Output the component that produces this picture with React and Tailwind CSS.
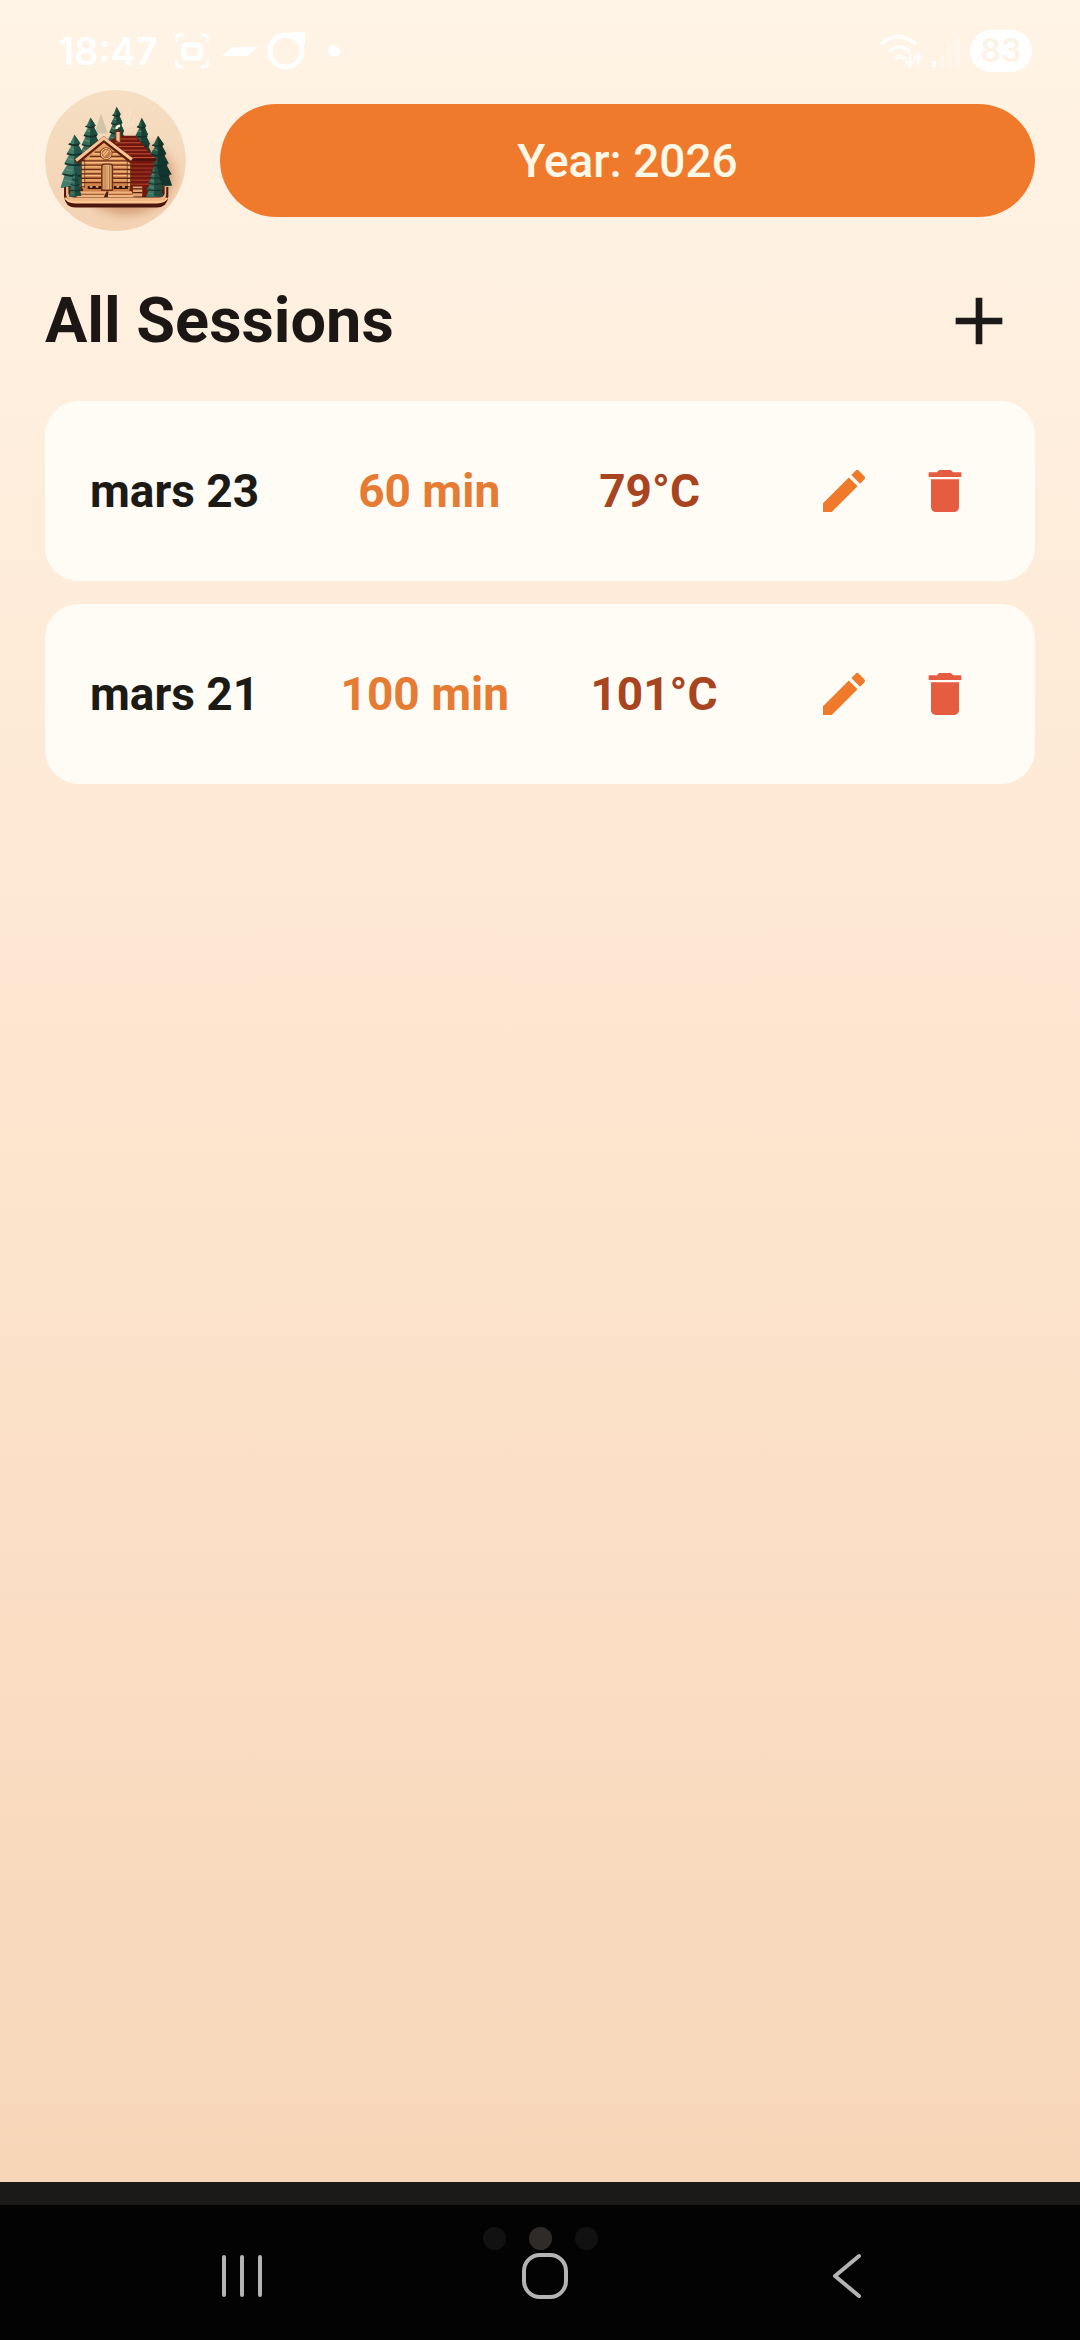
import React, { useState } from 'react';
import { MdAdd, MdDelete, MdEdit } from 'react-icons/md';

const initialSessions = [
  { id: 1, date: 'mars 23', duration: '60 min', temperature: '79°C' },
  { id: 2, date: 'mars 21', duration: '100 min', temperature: '101°C' },
];

const StatusBar = () => (
  <div className="flex items-center justify-between h-[90px] pt-[30px] pb-[18px] pl-[58px] pr-[48px] text-white">
    <div className="flex items-center">
      <span className="font-['Inter',sans-serif] text-[38px] leading-[42px] font-semibold">18:47</span>
      <svg viewBox="0 0 36 36" className="ml-4 w-9 h-9" fill="none" stroke="currentColor" strokeWidth="3">
        <path d="M2 9V6q0-4 4-4h3M27 2h3q4 0 4 4v3M34 27v3q0 4-4 4h-3M9 34H6q-4 0-4-4v-3" />
        <rect x="10" y="12" width="16" height="13" rx="2" strokeWidth="5" />
      </svg>
      <svg viewBox="0 0 36 12" className="ml-3 w-9 h-3" fill="currentColor">
        <path d="M0 11 8 4q2-2 5-2h23l-8 7q-2 2-5 2z" />
      </svg>
      <svg viewBox="0 0 40 40" className="ml-2 w-10 h-10" fill="none" stroke="currentColor" strokeWidth="5">
        <circle cx="20" cy="20" r="16" />
        <path d="M25 1h14v14z" fill="currentColor" stroke="none" />
      </svg>
      <span className="ml-[22px] w-3 h-3 rounded-full bg-white" />
    </div>
    <div className="flex items-center">
      <svg viewBox="0 0 44 36" className="w-11 h-9 opacity-80" fill="none" stroke="currentColor" strokeWidth="4">
        <path d="M1 11q17-15 35 0M8 19q11-10 22 0M14 26q6-5 11 0" />
        <path d="M30 21v11m-4-4 4 5 4-5M38 34V22m-4 4 4-5 4 5" strokeWidth="3" />
      </svg>
      <svg viewBox="0 0 30 32" className="ml-2 mr-2 w-[30px] h-8" fill="currentColor">
        <path d="M0 26h4v6H0z" />
        <path d="M8 18h4v14H8zM16 9h4v23h-4zM24 0h4v32h-4z" opacity=".3" />
      </svg>
      <span className="w-[62px] h-[42px] rounded-full bg-white text-center font-['Inter',sans-serif] text-[32px] leading-[42px] font-semibold text-[#fbf3e6]">
        83
      </span>
    </div>
  </div>
);

const Pine = ({ x, y, w, h, color, shade }) => (
  <svg x={x} y={y} width={w} height={h} viewBox="0 0 60 160" preserveAspectRatio="none">
    <path
      d="M30 0 43 27l-5 2 10 26-6 1 11 29-6 2 12 32-7 1 8 33-60 7 9-38-7-2 13-31-7-1 12-31-6-1 11-26-5-1z"
      fill={color}
    />
    <path
      d="M30 0 43 27l-5 2 10 26-6 1 11 29-6 2 12 32-7 1 8 33H28z"
      fill={shade}
    />
    <path
      d="M18 28q12 8 22 1M14 57q17 9 32 0M10 87q20 10 40 1M6 119q24 10 48 2"
      fill="none"
      stroke="#123029"
      strokeWidth="5"
    />
    <path
      d="M20 41l9 4M16 72l12 5M12 104l14 5M8 137l16 4"
      stroke="#6d9180"
      strokeWidth="3"
    />
  </svg>
);

const CabinLogo = () => (
  <svg viewBox="46 30 422 422" className="w-[141px] h-[141px] shrink-0 rounded-full" role="img" aria-label="Sauna">
    <defs>
      <linearGradient id="disc" x1="0" y1="0" x2="0" y2="1">
        <stop offset="0" stopColor="#f6dfc3" />
        <stop offset="1" stopColor="#f3d2b2" />
      </linearGradient>
      <radialGradient id="shadow" cx="0.5" cy="0.5" r="0.5">
        <stop offset="0.4" stopColor="#a65c38" stopOpacity="0.8" />
        <stop offset="0.75" stopColor="#c98257" stopOpacity="0.4" />
        <stop offset="1" stopColor="#f3d2b2" stopOpacity="0" />
      </radialGradient>
      <linearGradient id="wall" x1="0" y1="0" x2="0" y2="1">
        <stop offset="0" stopColor="#eaa869" />
        <stop offset="1" stopColor="#cf7f46" />
      </linearGradient>
      <linearGradient id="door" x1="0" y1="0" x2="1" y2="0">
        <stop offset="0" stopColor="#c98548" />
        <stop offset="0.5" stopColor="#f6cd94" />
        <stop offset="1" stopColor="#c98548" />
      </linearGradient>
    </defs>
    <circle cx="257" cy="241" r="211" fill="url(#disc)" />
    <ellipse cx="290" cy="290" rx="180" ry="145" fill="url(#shadow)" />
    <path d="M214 100l20 60h-40z" fill="#d3c5a8" />
    <path
      d="M274 146q-2-10 10-14-2-18 4-34M290 138q14-14 3-22 10-4 6-26M302 138q13-10 11-30"
      fill="none"
      stroke="#f7e3c8"
      strokeWidth="5"
      strokeLinecap="round"
    />
    <Pine x={230} y={80} w={60} h={140} color="#2b6150" shade="#1a4439" />
    <Pine x={145} y={112} w={74} h={150} color="#346c59" shade="#204c40" />
    <Pine x={302} y={113} w={66} h={150} color="#295e4e" shade="#184036" />
    <Pine x={92} y={163} w={84} h={160} color="#437c6c" shade="#245347" />
    <Pine x={342} y={167} w={84} h={156} color="#265548" shade="#12362d" />

    {/* base */}
    <path d="M103 320v28q3 33 34 34h244q31-1 34-34v-28z" fill="#4c160d" />
    <path d="M109 320v24q4 22 28 24h244q24-2 28-24v-24z" fill="#f2b684" />
    <path d="M116 318h288v22q-2 12-18 12H134q-16 0-18-12z" fill="#4a1c12" />

    {/* side wall and its roof */}
    <path d="M240 183 264 167h54l62 73-8 4v103H298z" fill="#701810" />
    <path
      d="M300 252h72M300 264h72M300 276h72M300 288h72M300 300h72M300 312h72"
      stroke="#9c3421"
      strokeWidth="4"
    />
    <path
      d="M262 177h60M256 188h76M266 199h76M280 210h72M292 221h72M304 232h70"
      stroke="#c04e31"
      strokeWidth="3"
    />
    <path d="M304 239h76" stroke="#4c0f0a" strokeWidth="6" />

    {/* chimney */}
    <path d="M258 154h13v36l-13-9z" fill="#f3c393" stroke="#75301b" strokeWidth="3" />
    <path d="M254 152h20" stroke="#52291b" strokeWidth="6" />
    <path d="M261 147q-2-10 10-10" fill="none" stroke="#fff5df" strokeWidth="8" />

    {/* front wall */}
    <path d="M158 235 223 181l78 57v98H158z" fill="url(#wall)" stroke="#6d2716" strokeWidth="4" />
    <path
      d="M195 216h70M180 229h104M160 242h140M160 255h140M160 268h56M250 268h50M160 281h56M250 281h50M160 294h56M250 294h50M160 307h56M250 307h50"
      stroke="#6e2c17"
      strokeWidth="4"
    />
    <path
      d="M190 221h80M172 234h114M166 247h130M166 260h50M250 260h46M166 273h50M250 273h46M166 286h50M250 286h46M166 299h50M250 299h46"
      stroke="#f8c083"
      strokeWidth="3"
    />
    <path d="M160 238v84M297 238v84" stroke="#5a2815" strokeWidth="12" />
    <path d="M160 244v80M297 244v80" stroke="#eeb072" strokeWidth="8" strokeDasharray="9 4" />
    <path d="M139 246 222 178l84 65" fill="none" stroke="#5f1f0e" strokeWidth="16" />
    <path d="M139 241 222 174l84 64" fill="none" stroke="#fbc697" strokeWidth="9" />
    <circle cx="229" cy="220" r="16" fill="#c97d45" stroke="#73321b" strokeWidth="6" />
    <circle cx="229" cy="220" r="15" fill="none" stroke="#f8cc95" strokeWidth="3" />
    <path d="M222 228l14-16M219 221l10-10" stroke="#f8cc95" strokeWidth="3" />
    <path d="M216 330v-70q0-8 8-8h16q8 0 8 8v70z" fill="url(#door)" stroke="#6b2d17" strokeWidth="4" />
    <path d="M226 256v72M232 256v72M239 256v72" stroke="#9a5b30" strokeWidth="2" />

    {/* benches and steps */}
    <path d="M174 322h40M252 322h42" stroke="#35130c" strokeWidth="9" />
    <path d="M180 320h8M198 320h8M260 320h8M277 320h8" stroke="#e5a068" strokeWidth="5" />
    <path d="M146 333h84l-8 18h-82zM236 333h69l7 18h-78z" fill="#f0b57c" />
    <path d="M144 342h80M236 342h71" stroke="#8a4323" strokeWidth="3" />
    <path d="M309 319h28v30h-28z" fill="#e5a36d" />
    <path d="M309 326h28M309 337h28" stroke="#54200f" strokeWidth="4" />
    <Pine x={117} y={268} w={38} h={82} color="#32695b" shade="#1c4a3f" />
    <Pine x={348} y={258} w={52} h={94} color="#397061" shade="#214d42" />
    <path d="M107 352q6 14 30 14h244q24 0 30-14" fill="none" stroke="#ffc793" strokeWidth="7" />
  </svg>
);

const SessionRow = ({ session, onDelete }) => (
  <li className="flex items-center justify-between h-[180px] px-[45px] rounded-[34px] bg-[#fffcf5] text-[46px] leading-[60px] font-bold">
    <span className="text-[#1c1a15]">{session.date}</span>
    <span className="text-[#e67b34]">{session.duration}</span>
    <span className="text-[#a84420]">{session.temperature}</span>
    <div className="flex gap-[11px]">
      <button
        type="button"
        aria-label={`Edit ${session.date}`}
        className="flex items-center justify-center w-[90px] h-[90px] text-[#f07a2b]"
      >
        <MdEdit className="w-14 h-14" />
      </button>
      <button
        type="button"
        aria-label={`Delete ${session.date}`}
        onClick={() => onDelete(session.id)}
        className="flex items-center justify-center w-[90px] h-[90px] text-[#e65c41]"
      >
        <MdDelete className="w-14 h-14" />
      </button>
    </div>
  </li>
);

const BottomBar = () => (
  <footer>
    <div className="h-[23px] bg-[#1c1a19]" />
    <div className="h-[135px] pt-[22px] bg-[#030303]">
      <div className="flex justify-center gap-[23px]">
        <span className="w-[23px] h-[23px] rounded-full bg-[#111111]" />
        <span className="w-[23px] h-[23px] rounded-full bg-[#2f2b28]" />
        <span className="w-[23px] h-[23px] rounded-full bg-[#111111]" />
      </div>
      <nav className="grid grid-cols-3 justify-items-center pt-[3px] pl-[92px] pr-[82px] text-[#b4b4b4]">
        <button type="button" aria-label="Recent apps">
          <svg viewBox="0 0 46 46" className="w-[46px] h-[46px]" stroke="currentColor" strokeWidth="4" strokeLinecap="round">
            <path d="M4 4v38M22 4v38M40 4v38" />
          </svg>
        </button>
        <button type="button" aria-label="Home">
          <svg viewBox="0 0 46 46" className="w-[46px] h-[46px]" fill="none" stroke="currentColor" strokeWidth="4">
            <rect x="2" y="2" width="42" height="42" rx="16" />
          </svg>
        </button>
        <button type="button" aria-label="Back">
          <svg viewBox="0 0 46 46" className="w-[46px] h-[46px]" fill="none" stroke="currentColor" strokeWidth="4" strokeLinecap="round" strokeLinejoin="round">
            <path d="M35 3 11 23l24 20" />
          </svg>
        </button>
      </nav>
    </div>
  </footer>
);

const App = () => {
  const [sessions, setSessions] = useState(initialSessions);

  const handleDelete = (id) => {
    setSessions(prev => prev.filter(session => session.id !== id));
  };

  return (
    <div className="flex flex-col min-h-screen font-['Roboto',sans-serif] bg-linear-to-b from-[#fff4e6] via-[#fde6d0] via-45% to-[#f6d3b4]">
      <StatusBar />
      <main className="flex-1 px-[45px]">
        <div className="flex items-center gap-[34px]">
          <CabinLogo />
          <button
            type="button"
            className="flex-1 h-[113px] rounded-full bg-[#f07a2c] text-[#fff8e7] text-[46px] leading-[60px] font-medium"
          >
            Year: 2026
          </button>
        </div>

        <div className="flex items-center justify-between mt-[34px] mb-[24px]">
          <h1 className="text-[63px] leading-[80px] font-bold text-[#1c1715]">All Sessions</h1>
          <button
            type="button"
            aria-label="Add session"
            className="flex items-center justify-center w-[112px] h-[112px] text-[#1c1a19]"
          >
            <MdAdd className="w-20 h-20" />
          </button>
        </div>

        <ul className="flex flex-col gap-[23px]">
          {sessions.map(session => (
            <SessionRow key={session.id} session={session} onDelete={handleDelete} />
          ))}
        </ul>
      </main>
      <BottomBar />
    </div>
  );
};

export default App;
